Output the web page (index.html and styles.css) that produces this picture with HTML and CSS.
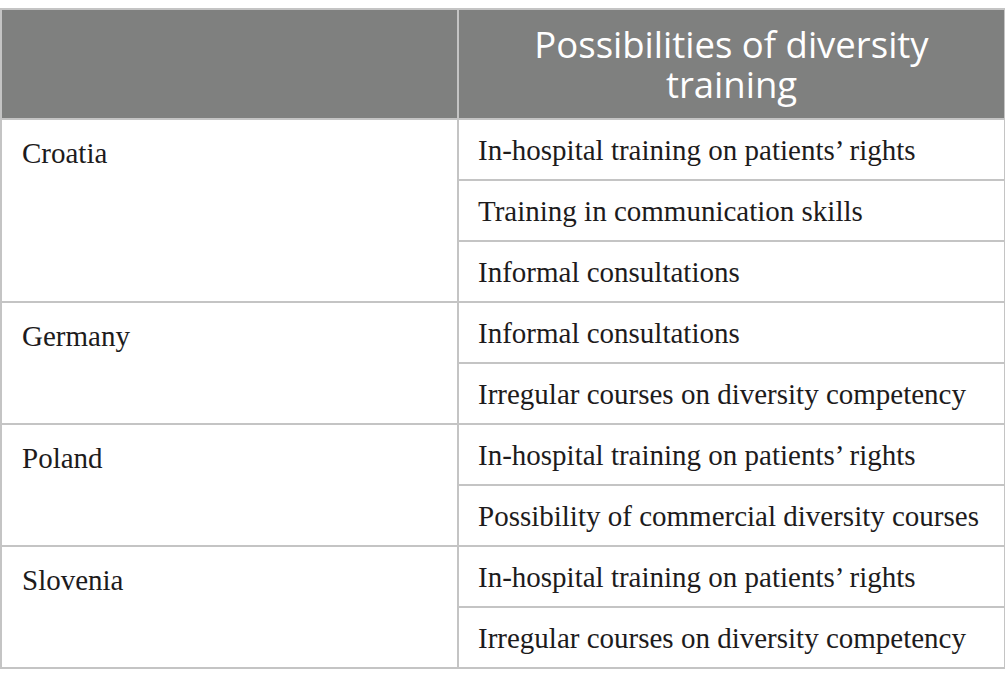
FILE: index.html
```html
<!DOCTYPE html>
<html lang="en">
<head>
<meta charset="utf-8">
<link rel="stylesheet" href="styles.css">
</head>
<body>
<table class="tbl">
  <colgroup>
    <col class="col1">
    <col class="col2">
  </colgroup>
  <thead>
    <tr>
      <th class="c1"></th>
      <th class="c2">Possibilities of diversity training</th>
    </tr>
  </thead>
  <tbody>
    <tr><td class="country" rowspan="3">Croatia</td><td>In-hospital training on patients’ rights</td></tr>
    <tr><td>Training in communication skills</td></tr>
    <tr><td>Informal consultations</td></tr>
    <tr><td class="country" rowspan="2">Germany</td><td>Informal consultations</td></tr>
    <tr><td>Irregular courses on diversity competency</td></tr>
    <tr><td class="country" rowspan="2">Poland</td><td>In-hospital training on patients’ rights</td></tr>
    <tr><td>Possibility of commercial diversity courses</td></tr>
    <tr><td class="country" rowspan="2">Slovenia</td><td>In-hospital training on patients’ rights</td></tr>
    <tr><td>Irregular courses on diversity competency</td></tr>
  </tbody>
</table>
</body>
</html>
```
FILE: styles.css
```css
html, body {
  margin: 0;
  padding: 0;
  background: #ffffff;
}
body {
  padding-top: 8px;
}
.tbl {
  width: 1004px;
  border-collapse: collapse;
  table-layout: fixed;
  font-family: "Liberation Serif", "Times New Roman", serif;
  color: #1d1b1c;
}
.col1 {
  width: 457px;
}
.col2 {
  width: 547px;
}
.tbl th, .tbl td {
  border: 2px solid #c4c4c4;
  padding: 0;
}
.tbl th {
  background: #7f807f;
  height: 108px;
  font-family: "Open Sans", "Noto Sans", sans-serif;
  font-weight: 400;
  color: #ffffff;
  font-size: 36.5px;
  line-height: 40px;
  text-align: center;
  vertical-align: middle;
  padding: 0 20px;
}
.tbl td {
  height: 59px;
  font-size: 29px;
  line-height: 34px;
  padding: 0 0 0 19px;
  white-space: nowrap;
  overflow: hidden;
  vertical-align: middle;
}
.tbl td.country {
  vertical-align: top;
  padding-top: 16px;
  padding-left: 20px;
}
```
